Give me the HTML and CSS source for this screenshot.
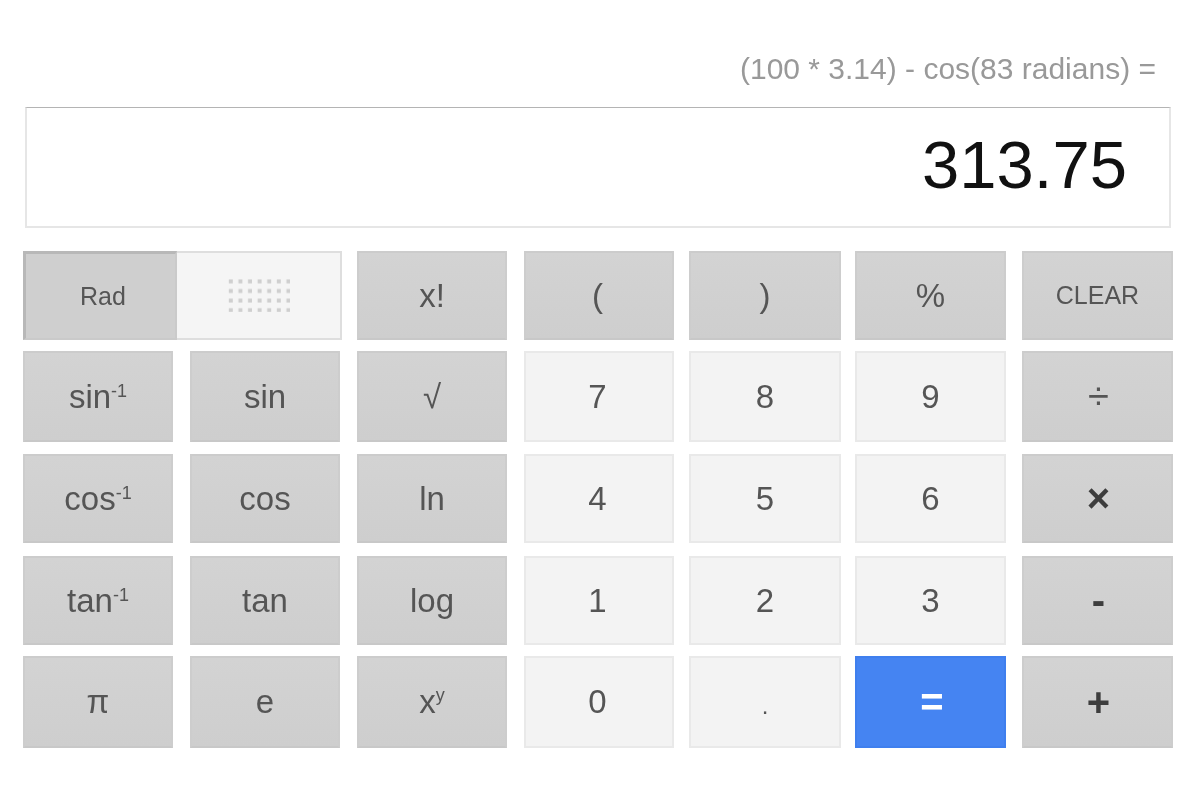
FILE: index.html
```html
<!DOCTYPE html>
<html lang="en">
<head>
<meta charset="utf-8">
<title>Calculator</title>
<link rel="stylesheet" href="styles.css">
</head>
<body>
<main class="calc">
  <div class="expr">(100 * 3.14) - cos(83 radians) =</div>
  <div class="display">313.75</div>
  <div class="keys">
    <div class="row r1">
      <div class="toggle">
        <div class="toggle-on">Rad</div>
        <div class="toggle-off">
          <svg width="62" height="33" viewBox="0 0 62 33" aria-hidden="true">
            <defs><pattern id="dots" width="9.6" height="9.6" patternUnits="userSpaceOnUse"><rect x="0.8" y="0.4" width="4" height="4" fill="#cfcfcf"/></pattern></defs>
            <rect width="62" height="33" fill="url(#dots)"/>
          </svg>
        </div>
      </div>
      <button class="k fn">x!</button>
      <button class="k fn c4">(</button>
      <button class="k fn w2">)</button>
      <button class="k fn w1">%</button>
      <button class="k fn w1 small">CLEAR</button>
    </div>
    <div class="row r2">
      <button class="k fn">sin<sup>-1</sup></button>
      <button class="k fn">sin</button>
      <button class="k fn">√</button>
      <button class="k num c4">7</button>
      <button class="k num w2">8</button>
      <button class="k num w1">9</button>
      <button class="k fn w1 op div">÷</button>
    </div>
    <div class="row r3">
      <button class="k fn">cos<sup>-1</sup></button>
      <button class="k fn">cos</button>
      <button class="k fn">ln</button>
      <button class="k num c4">4</button>
      <button class="k num w2">5</button>
      <button class="k num w1">6</button>
      <button class="k fn w1 op">×</button>
    </div>
    <div class="row r4">
      <button class="k fn">tan<sup>-1</sup></button>
      <button class="k fn">tan</button>
      <button class="k fn">log</button>
      <button class="k num c4">1</button>
      <button class="k num w2">2</button>
      <button class="k num w1">3</button>
      <button class="k fn w1 op">-</button>
    </div>
    <div class="row r5">
      <button class="k fn">π</button>
      <button class="k fn">e</button>
      <button class="k fn">x<sup class="sup-y">y</sup></button>
      <button class="k num c4">0</button>
      <button class="k num w2 dot">.</button>
      <button class="k eq w1">=</button>
      <button class="k fn w1 op">+</button>
    </div>
  </div>
</main>
</body>
</html>
```
FILE: styles.css
```css
* { box-sizing: border-box; }
html, body { margin: 0; height: 100%; background: #fff; }
body { overflow: hidden; }
.calc {
  width: 1200px;
  height: 800px;
  padding: 52px 0 0 23px;
  font-family: "Liberation Sans", Arial, sans-serif;
  color: #444;
  filter: blur(0.5px);
}
.expr {
  height: 34px;
  padding-right: 44px;
  text-align: right;
  font-size: 30px;
  line-height: 34px;
  color: #999;
}
.display {
  width: 1146px;
  height: 121px;
  margin: 21px 0 23px 2px;
  padding-right: 42px;
  border: 2px solid #e6e6e6;
  border-top: 1px solid #b4b4b4;
  text-align: right;
  font-size: 67px;
  line-height: 114px;
  color: #111;
}
.keys { display: flex; flex-direction: column; }
.row {
  display: grid;
  grid-template-columns: 167px 167px 167px 165px 166px 167px 151px;
}
.r1 { height: 89px; margin-bottom: 11px; }
.r2 { height: 91px; margin-bottom: 12px; }
.r3 { height: 89px; margin-bottom: 13px; }
.r4 { height: 89px; margin-bottom: 11px; }
.r5 { height: 92px; }
.k {
  width: 150px;
  height: 100%;
  margin: 0;
  padding: 0;
  font: inherit;
  font-size: 33px;
  color: #555;
  border: 2px solid;
  border-radius: 0;
  display: flex;
  align-items: center;
  justify-content: center;
}
.w1 { width: 151px; }
.w2 { width: 152px; }
.c4 { padding-right: 3px; }
.fn {
  background: linear-gradient(#d3d3d3, #cecece);
  border-color: #cccccc #cdcdcd #c8c8c8;
}
.num {
  background: #f3f3f3;
  border-color: #e9e9e9;
  color: #555;
}
.eq {
  background: #4584f2;
  border-color: #3f7fee;
  color: #fff;
  font-weight: 700;
  font-size: 40px;
  padding-left: 3px;
}
.op { color: #3d3d3d; font-weight: 700; font-size: 40px; padding-left: 2px; }
.div { font-weight: 400; font-size: 38px; color: #555; }
.small { font-size: 25px; }
.dot { font-size: 24px; padding-top: 8px; }
sup {
  font-size: 18px;
  line-height: 1;
  margin-top: -12px;
  align-self: center;
}
.sup-y { margin-top: -14px; font-size: 18px; }
.toggle {
  grid-column: span 2;
  width: 319px;
  height: 100%;
  display: flex;
}
.toggle-on {
  width: 154px;
  padding-left: 5px;
  display: flex;
  align-items: center;
  justify-content: center;
  font-size: 25px;
  color: #555;
  background: #cfcfcf;
  border: 2px solid #cacaca;
  border-top: 3px solid #b8b8b8;
  border-left: 3px solid #b8b8b8;
}
.toggle-off {
  flex: 1;
  display: flex;
  align-items: center;
  justify-content: center;
  background: #f5f5f5;
  border: 2px solid #dedede;
  border-left: 0;
}
```
